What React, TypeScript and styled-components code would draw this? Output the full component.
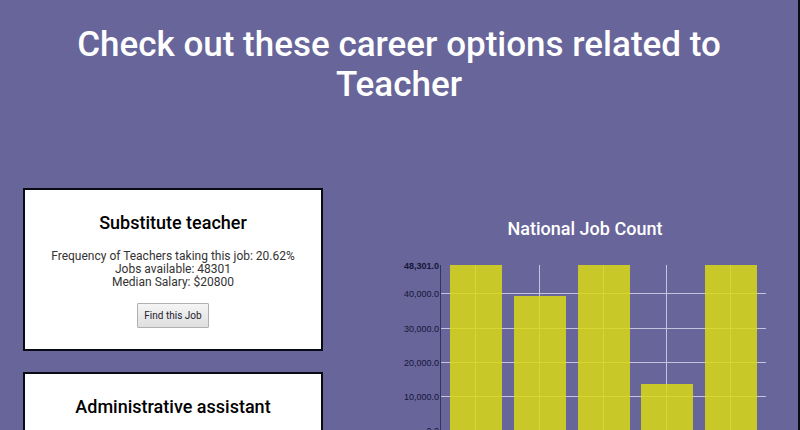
import React from "react";
import styled, { createGlobalStyle } from "styled-components";

const GlobalStyle = createGlobalStyle`
  * { box-sizing: border-box; }
  body {
    margin: 0;
    background: #676599;
    font-family: Roboto, "Liberation Sans", sans-serif;
    color: #fff;
  }
  html { scrollbar-width: none; }
`;

const Page = styled.main`
  min-height: 100vh;
  padding: 25px 0;
  border-right: 2px solid #0b0b12;
`;

const Title = styled.h1`
  margin: 0 0 83px;
  padding: 0 24px;
  font-size: 35px;
  font-weight: 500;
  line-height: 40px;
  text-align: center;
`;

const Columns = styled.div`
  display: grid;
  grid-template-columns: 300px 1fr;
  column-gap: 49px;
  align-items: start;
  padding-left: 23px;
`;

const CardList = styled.div`
  display: grid;
  gap: 21px;
`;

const Card = styled.article`
  display: flex;
  flex-direction: column;
  align-items: center;
  min-height: 163px;
  padding: 22px 16px 20px;
  border: 2px solid #0a0a14;
  background: #fff;
  color: #333;
  text-align: center;
`;

const CardTitle = styled.h2`
  margin: 0 0 16px;
  color: #000;
  font-size: 18px;
  font-weight: 500;
  line-height: 22px;
`;

const Facts = styled.p`
  margin: 0 0 14px;
  font-size: 12px;
  line-height: 13px;
`;

const Fact = styled.span`
  display: block;
`;

const JobButton = styled.button`
  height: 25px;
  padding: 0 6px;
  border: 1px solid #b0b0b0;
  border-radius: 1px;
  background: linear-gradient(#f5f5f5, #dfdfdf);
  color: #222230;
  font: 400 10px Roboto, sans-serif;
`;

const ChartPanel = styled.section`
  padding: 30px 30px 0;
`;

const ChartTitle = styled.h2`
  margin: 0 0 16px;
  font-size: 18px;
  font-weight: 500;
  line-height: 22px;
  text-align: center;
`;

const ChartSvg = styled.svg`
  display: block;
  width: 100%;
`;

const AxisLabel = styled.text<{ $bold?: boolean }>`
  fill: #16163a;
  font-family: "Liberation Sans", Arial, sans-serif;
  font-size: 9px;
  font-weight: ${(p) => (p.$bold ? 700 : 400)};
  text-anchor: end;
`;

type Job = { title: string; facts: string[] };

const jobs: Job[] = [
  {
    title: "Substitute teacher",
    facts: [
      "Frequency of Teachers taking this job: 20.62%",
      "Jobs available: 48301",
      "Median Salary: $20800",
    ],
  },
  { title: "Administrative assistant", facts: [] },
];

const counts = [48301, 39200, 48301, 13600, 48301];
const ticks = [0, 10000, 20000, 30000, 40000, 48301];
const BASE = 174;
const TOP = 9;
const yOf = (v: number) => Math.round(BASE - (v / 48301) * (BASE - TOP));
const centerOf = (i: number) => Math.round(73 + i * 63.8);

function JobChart() {
  return (
    <ChartSvg viewBox="0 0 366 180" role="img" aria-label="National Job Count">
      {ticks.slice(0, 5).map((t) => (
        <rect key={t} x="38" y={yOf(t)} width="326" height="1" fill="#c5c4dc" />
      ))}
      {counts.map((_, i) => (
        <rect key={i} x={centerOf(i)} y={TOP} width="1" height={BASE - TOP} fill="#c5c4dc" />
      ))}
      {counts.map((c, i) => (
        <rect
          key={i}
          x={centerOf(i) - 25}
          y={yOf(c)}
          width="52"
          height={BASE - yOf(c)}
          fill="#d9d914"
          fillOpacity="0.85"
        />
      ))}
      <rect x="38" y={TOP} width="1" height={BASE - TOP} fill="#34335f" />
      {ticks.map((t) => (
        <AxisLabel key={t} x="37" y={yOf(t) + 4} $bold={t === 48301}>
          {t.toLocaleString("en-US", { minimumFractionDigits: 1 })}
        </AxisLabel>
      ))}
    </ChartSvg>
  );
}

export default function App() {
  return (
    <>
      <GlobalStyle />
      <Page>
        <Title>Check out these career options related to Teacher</Title>
        <Columns>
          <CardList>
            {jobs.map((job) => (
              <Card key={job.title}>
                <CardTitle>{job.title}</CardTitle>
                {job.facts.length > 0 && (
                  <>
                    <Facts>
                      {job.facts.map((fact) => (
                        <Fact key={fact}>{fact}</Fact>
                      ))}
                    </Facts>
                    <JobButton type="button">Find this Job</JobButton>
                  </>
                )}
              </Card>
            ))}
          </CardList>
          <ChartPanel>
            <ChartTitle>National Job Count</ChartTitle>
            <JobChart />
          </ChartPanel>
        </Columns>
      </Page>
    </>
  );
}
